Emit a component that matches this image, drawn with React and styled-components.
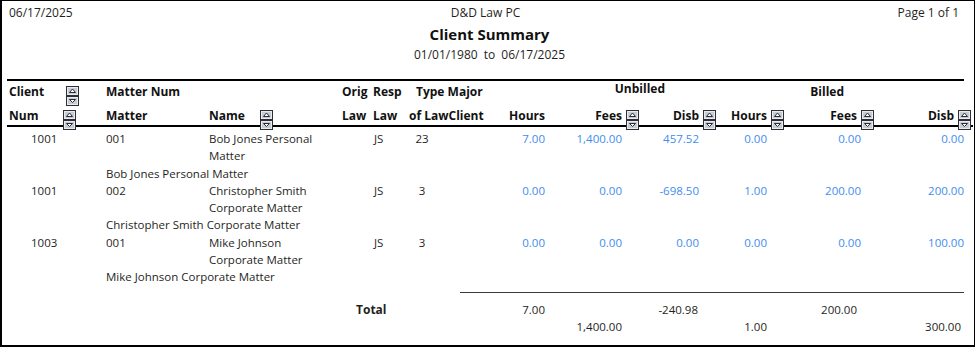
import React from 'react';
import styled, { createGlobalStyle } from 'styled-components';

const GlobalStyle = createGlobalStyle`
    body {
        margin: 0;
        background: #ffffff;
        font-family: "Open Sans", "Liberation Sans", sans-serif;
        color: #1f1f24;
    }
`;

const BLUE = '#3f8cf0';

const COLS = '101px 103px 133px 31px 36px 74px 62px 77px 77px 68px 94px 103px';

const Frame = styled.div`
    width: 969px;
    height: 344px;
    border: 2px solid #000;
    border-top-width: 1px;
    padding: 0 0 0 3px;
    box-sizing: content-box;
    overflow: hidden;
`;

const TopBar = styled.div`
    display: grid;
    grid-template-columns: 1fr auto 1fr;
    padding: 3px 12px 0 4px;
    font-size: 12px;
    line-height: 17px;
`;

const Company = styled.div`
    text-align: center;
`;

const PageNo = styled.div`
    text-align: right;
    padding-right: 3px;
`;

const Title = styled.div`
    text-align: center;
    font-weight: 700;
    font-size: 15px;
    line-height: 20px;
    margin-top: 3px;
    color: #111;
`;

const Range = styled.div`
    text-align: center;
    font-size: 12px;
    line-height: 16px;
    margin-top: 3px;
    word-spacing: 3px;
`;

const Rule = styled.div`
    width: ${p => p.$w}px;
    height: ${p => p.$h || 2}px;
    background: ${p => p.$c || '#000'};
    margin-left: ${p => p.$x || 0}px;
    margin-top: ${p => p.$mt || 0}px;
`;

const Grid = styled.div`
    display: grid;
    grid-template-columns: ${COLS};
`;

const HeadGrid = styled(Grid)`
    grid-template-rows: 21px 23px;
    font-weight: 700;
    font-size: 12px;
    color: #111;
`;

const Head = styled.div`
    grid-column: ${p => p.$col};
    grid-row: ${p => p.$row};
    display: flex;
    align-items: ${p => (p.$row === 1 ? 'center' : 'flex-end')};
    justify-content: ${p => (p.$right ? 'flex-end' : 'flex-start')};
    padding-left: ${p => p.$pl || 0}px;
    padding-bottom: ${p => (p.$row === 1 ? 0 : 1)}px;
    padding-right: ${p => p.$pr || 0}px;
    margin-top: ${p => p.$mt || 0}px;
    white-space: nowrap;
`;

const Label = styled.span`
    position: relative;
    display: inline-block;
    line-height: 17px;
    min-width: ${p => p.$w || 0}px;
`;

const SortWrap = styled.span`
    position: absolute;
    top: 3px;
    left: ${p => (p.$at != null ? `${p.$at}px` : 'calc(100% + 4px)')};
    display: flex;
    flex-direction: column;
    z-index: 2;
`;

function SortArrow({ down }) {
    return (
        <svg width="13" height="10" viewBox="0 0 13 10">
            <rect x="0.5" y="0.5" width="12" height="9" fill="#c6ccd6" stroke="#2e2e33" />
            <rect x="1.5" y="1.5" width="10" height="7" fill="none" stroke="#e8ecf2" />
            {down ? (
                <polygon points="3.5,3.5 9.5,3.5 6.5,6.5" fill="#fff" stroke="#2a2a2e" strokeWidth="1" />
            ) : (
                <polygon points="6.5,3 9.5,6.5 3.5,6.5" fill="#fff" stroke="#2a2a2e" strokeWidth="1" />
            )}
        </svg>
    );
}

function Sort({ at }) {
    return (
        <SortWrap $at={at}>
            <SortArrow />
            <SortArrow down />
        </SortWrap>
    );
}

const Body = styled.div`
    padding-top: 3px;
    font-size: 11.5px;
    line-height: 17.3px;
`;

const Cell = styled.div`
    grid-column: ${p => p.$col};
    grid-row: ${p => p.$row || 'auto'};
    text-align: ${p => p.$align || 'left'};
    padding-left: ${p => p.$pl || 0}px;
    padding-right: ${p => p.$pr || 0}px;
    color: ${p => (p.$blue ? BLUE : 'inherit')};
    white-space: ${p => (p.$wrap ? 'normal' : 'nowrap')};
`;

const Desc = styled.div`
    grid-column: 2 / -1;
`;

const Totals = styled(Grid)`
    margin-top: 8px;
    font-size: 11.5px;
    line-height: 17px;
`;

const TotalLabel = styled.div`
    grid-column: 4 / 6;
    grid-row: 1;
    padding-left: 14px;
    font-weight: 700;
    font-size: 12px;
`;

const rows = [
    { client: '1001', matter: '001', name: 'Bob Jones Personal Matter', resp: 'JS', type: '23',
      vals: ['7.00', '1,400.00', '457.52', '0.00', '0.00', '0.00'] },
    { client: '1001', matter: '002', name: 'Christopher Smith Corporate Matter', resp: 'JS', type: '3',
      vals: ['0.00', '0.00', '-698.50', '1.00', '200.00', '200.00'] },
    { client: '1003', matter: '001', name: 'Mike Johnson Corporate Matter', resp: 'JS', type: '3',
      vals: ['0.00', '0.00', '0.00', '0.00', '0.00', '100.00'] },
];

function App() {
    return (
        <>
            <GlobalStyle />
            <Frame>
                <TopBar>
                    <div>06/17/2025</div>
                    <Company>D&amp;D Law PC</Company>
                    <PageNo>Page 1 of 1</PageNo>
                </TopBar>
                <Title>Client Summary</Title>
                <Range>01/01/1980 to 06/17/2025</Range>

                <Rule $w={957} $x={2} $mt={16} />
                <HeadGrid>
                    <Head $col={1} $row={1} $pl={4}><Label $w={57}>Client<Sort at={57} /></Label></Head>
                    <Head $col={2} $row={1}><Label>Matter Num</Label></Head>
                    <Head $col={4} $row={1}><Label>Orig</Label></Head>
                    <Head $col={5} $row={1}><Label>Resp</Label></Head>
                    <Head $col={6} $row={1} $pl={7}><Label>Type Major</Label></Head>
                    <Head $col="8 / 10" $row={1} $right $pr={34} $mt={-7}><Label>Unbilled</Label></Head>
                    <Head $col="10 / 13" $row={1} $right $pr={120}><Label>Billed</Label></Head>

                    <Head $col={1} $row={2} $pl={4}><Label $w={54}>Num<Sort at={54} /></Label></Head>
                    <Head $col={2} $row={2}><Label>Matter</Label></Head>
                    <Head $col={3} $row={2}><Label $w={51}>Name<Sort at={51} /></Label></Head>
                    <Head $col={4} $row={2}><Label>Law</Label></Head>
                    <Head $col={5} $row={2}><Label>Law</Label></Head>
                    <Head $col={6} $row={2}><Label>of LawClient</Label></Head>
                    <Head $col={7} $row={2} $right><Label>Hours</Label></Head>
                    <Head $col={8} $row={2} $right><Label>Fees<Sort /></Label></Head>
                    <Head $col={9} $row={2} $right><Label>Disb<Sort /></Label></Head>
                    <Head $col={10} $row={2} $right><Label>Hours<Sort /></Label></Head>
                    <Head $col={11} $row={2} $right $pr={4}><Label>Fees<Sort /></Label></Head>
                    <Head $col={12} $row={2} $right $pr={10}><Label>Disb<Sort /></Label></Head>
                </HeadGrid>
                <Rule $w={966} $x={2} />

                <Body>
                    {rows.map((r, i) => (
                        <Grid key={i}>
                            <Cell $col={1} $pl={26}>{r.client}</Cell>
                            <Cell $col={2}>{r.matter}</Cell>
                            <Cell $col={3} $pr={12} $wrap>{r.name}</Cell>
                            <Cell $col={5} $pl={1}>{r.resp}</Cell>
                            <Cell $col={6} $align="center" $pr={48}>{r.type}</Cell>
                            {r.vals.map((v, j) => (
                                <Cell key={j} $col={7 + j} $align="right" $blue>{v}</Cell>
                            ))}
                            <Desc>{r.name}</Desc>
                        </Grid>
                    ))}
                </Body>

                <Rule $w={504} $x={455} $h={1} $c="#3a3a3a" $mt={6} />
                <Totals>
                    <TotalLabel>Total</TotalLabel>
                    <Cell $col={7} $align="right">7.00</Cell>
                    <Cell $col={9} $align="right" $pr={1}>-240.98</Cell>
                    <Cell $col={11} $align="right" $pr={4}>200.00</Cell>
                    <Cell $col={8} $row={2} $align="right">1,400.00</Cell>
                    <Cell $col={10} $row={2} $align="right">1.00</Cell>
                    <Cell $col={12} $row={2} $align="right" $pr={3}>300.00</Cell>
                </Totals>
            </Frame>
        </>
    );
}

export default App;
